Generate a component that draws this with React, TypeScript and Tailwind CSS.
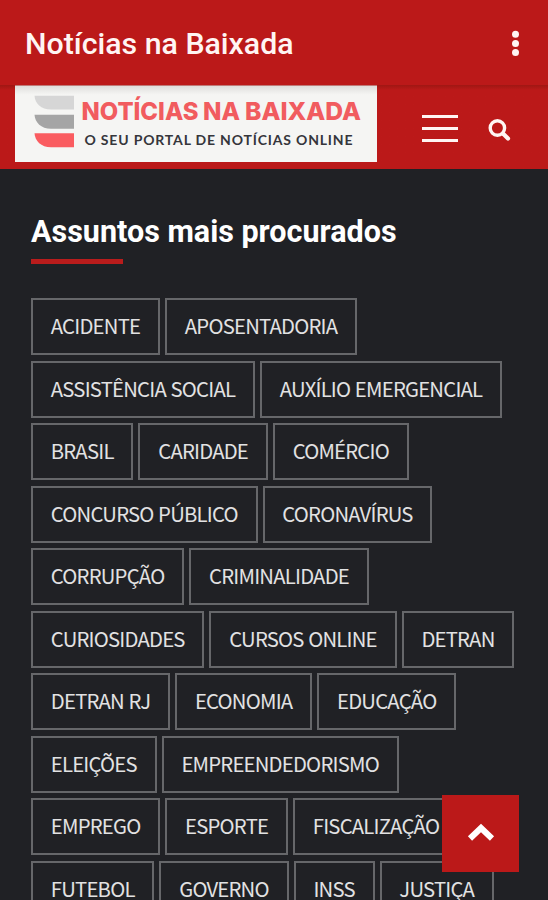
const tagRows = [
  ["ACIDENTE", "APOSENTADORIA"],
  ["ASSISTÊNCIA SOCIAL", "AUXÍLIO EMERGENCIAL"],
  ["BRASIL", "CARIDADE", "COMÉRCIO"],
  ["CONCURSO PÚBLICO", "CORONAVÍRUS"],
  ["CORRUPÇÃO", "CRIMINALIDADE"],
  ["CURIOSIDADES", "CURSOS ONLINE", "DETRAN"],
  ["DETRAN RJ", "ECONOMIA", "EDUCAÇÃO"],
  ["ELEIÇÕES", "EMPREENDEDORISMO"],
  ["EMPREGO", "ESPORTE", "FISCALIZAÇÃO"],
  ["FUTEBOL", "GOVERNO", "INSS", "JUSTIÇA"]
];

function Logo() {
  return (
    <svg width="362" height="77" viewBox="0 0 362 77" className="block" role="img" aria-label="Notícias na Baixada">
      <defs>
        <linearGradient id="logo-shade" x1="0" y1="0" x2="0" y2="1">
          <stop offset="0" stopColor="#dedddb" />
          <stop offset="0.12" stopColor="#f5f5f3" />
        </linearGradient>
      </defs>
      <rect y="0.5" width="362" height="76.5" fill="url(#logo-shade)" />
      <path d="M19.5 10.8H59V24.5H36C26 24.5 20 18.5 19.5 10.8Z" fill="#d6d6d6" />
      <path d="M19.5 29.8H59V43.8H36C26 43.8 20 37.5 19.5 29.8Z" fill="#a5a5a5" />
      <path d="M19.5 48.3H59V62.3H36C26 62.3 20 56 19.5 48.3Z" fill="#fa5c60" />
      <g className="fill-[#f15c5f] font-['Inter',sans-serif] text-[25px] font-extrabold">
        <text x="66.5" y="35" textLength="117" lengthAdjust="spacingAndGlyphs">
          NOTÍCIAS
        </text>
        <text x="188" y="35" textLength="37" lengthAdjust="spacingAndGlyphs">
          NA
        </text>
        <text x="230" y="35" textLength="116" lengthAdjust="spacingAndGlyphs">
          BAIXADA
        </text>
      </g>
      <text x="69.5" y="60" textLength="268" className="fill-[#35363b] font-['Lato',sans-serif] text-[14px] font-bold">
        O SEU PORTAL DE NOTÍCIAS ONLINE
      </text>
    </svg>
  );
}

function AppBar() {
  return (
    <header className="flex h-[85px] items-center justify-between bg-[#bb1919] pt-[3px] pr-7 pl-[25px]">
      <h1 className="pt-px font-['Roboto',sans-serif] text-[30.3px] leading-none font-medium whitespace-nowrap text-[#fff5f3]">
        Notícias na Baixada
      </h1>
      <button type="button" aria-label="Mais opções">
        <svg width="9" height="28" viewBox="0 0 9 28" fill="#fff5f3">
          <circle cx="4.5" cy="4.3" r="3.5" />
          <circle cx="4.5" cy="13.4" r="3.5" />
          <circle cx="4.5" cy="22.6" r="3.5" />
        </svg>
      </button>
    </header>
  );
}

function SiteBar() {
  return (
    <div className="flex h-[84px] items-start bg-[#bb1919] bg-linear-to-b from-[#9f1713] to-[#bb1919] to-[5px] pl-[15px]">
      <Logo />
      <div className="flex items-start pt-[30px] pl-[45px]">
        <button type="button" aria-label="Menu" className="flex w-9 flex-col gap-[9px]">
          <span className="h-[3px] bg-[#fff5f3]" />
          <span className="h-[3px] bg-[#fff5f3]" />
          <span className="h-[3px] bg-[#fff5f3]" />
        </button>
        <button type="button" aria-label="Buscar" className="mt-[3px] ml-[30px]">
          <svg width="23" height="24" viewBox="0 0 23 24" fill="none" stroke="#fff5f3">
            <circle cx="9.4" cy="10" r="7.2" strokeWidth="3.4" />
            <path d="M15.2 15.8L20 20.6" strokeWidth="4.2" strokeLinecap="round" />
          </svg>
        </button>
      </div>
    </div>
  );
}

export default function App() {
  return (
    <div className="relative h-[900px] w-[548px] overflow-hidden bg-[#202125]">
      <AppBar />
      <SiteBar />

      <main className="pt-[41px] pl-[31px]">
        <h2 className="h-[49px] font-['Roboto',sans-serif] text-[30.5px] leading-[43px] font-bold whitespace-nowrap text-white">
          Assuntos mais procurados
        </h2>
        <div className="h-[5px] w-[92px] bg-[#b91c1c]" />

        <div className="mt-[34px] flex flex-col gap-[5.5px]">
          {tagRows.map((row) => (
            <div key={row[0]} className="flex gap-[5px]">
              {row.map((tag) => (
                <a
                  key={tag}
                  className="flex h-[57px] items-center border-2 border-[#66676a] pr-[17.8px] pb-0.5 pl-[17.8px] font-['Noto_Sans_CJK_JP',sans-serif] text-[20.3px] leading-none tracking-[-0.78px] whitespace-nowrap text-[#e2e2e3] [word-spacing:0.8px]"
                >
                  {tag}
                </a>
              ))}
            </div>
          ))}
        </div>
      </main>

      <button
        type="button"
        aria-label="Voltar ao topo"
        className="absolute top-[795px] left-[442px] flex size-[77px] items-center justify-center bg-[#bb1919]"
      >
        <svg width="30" height="22" viewBox="0 0 30 22" fill="none" stroke="#fff" strokeWidth="6">
          <path d="M4 15.5L15 5L26 15.5" />
        </svg>
      </button>
    </div>
  );
}
